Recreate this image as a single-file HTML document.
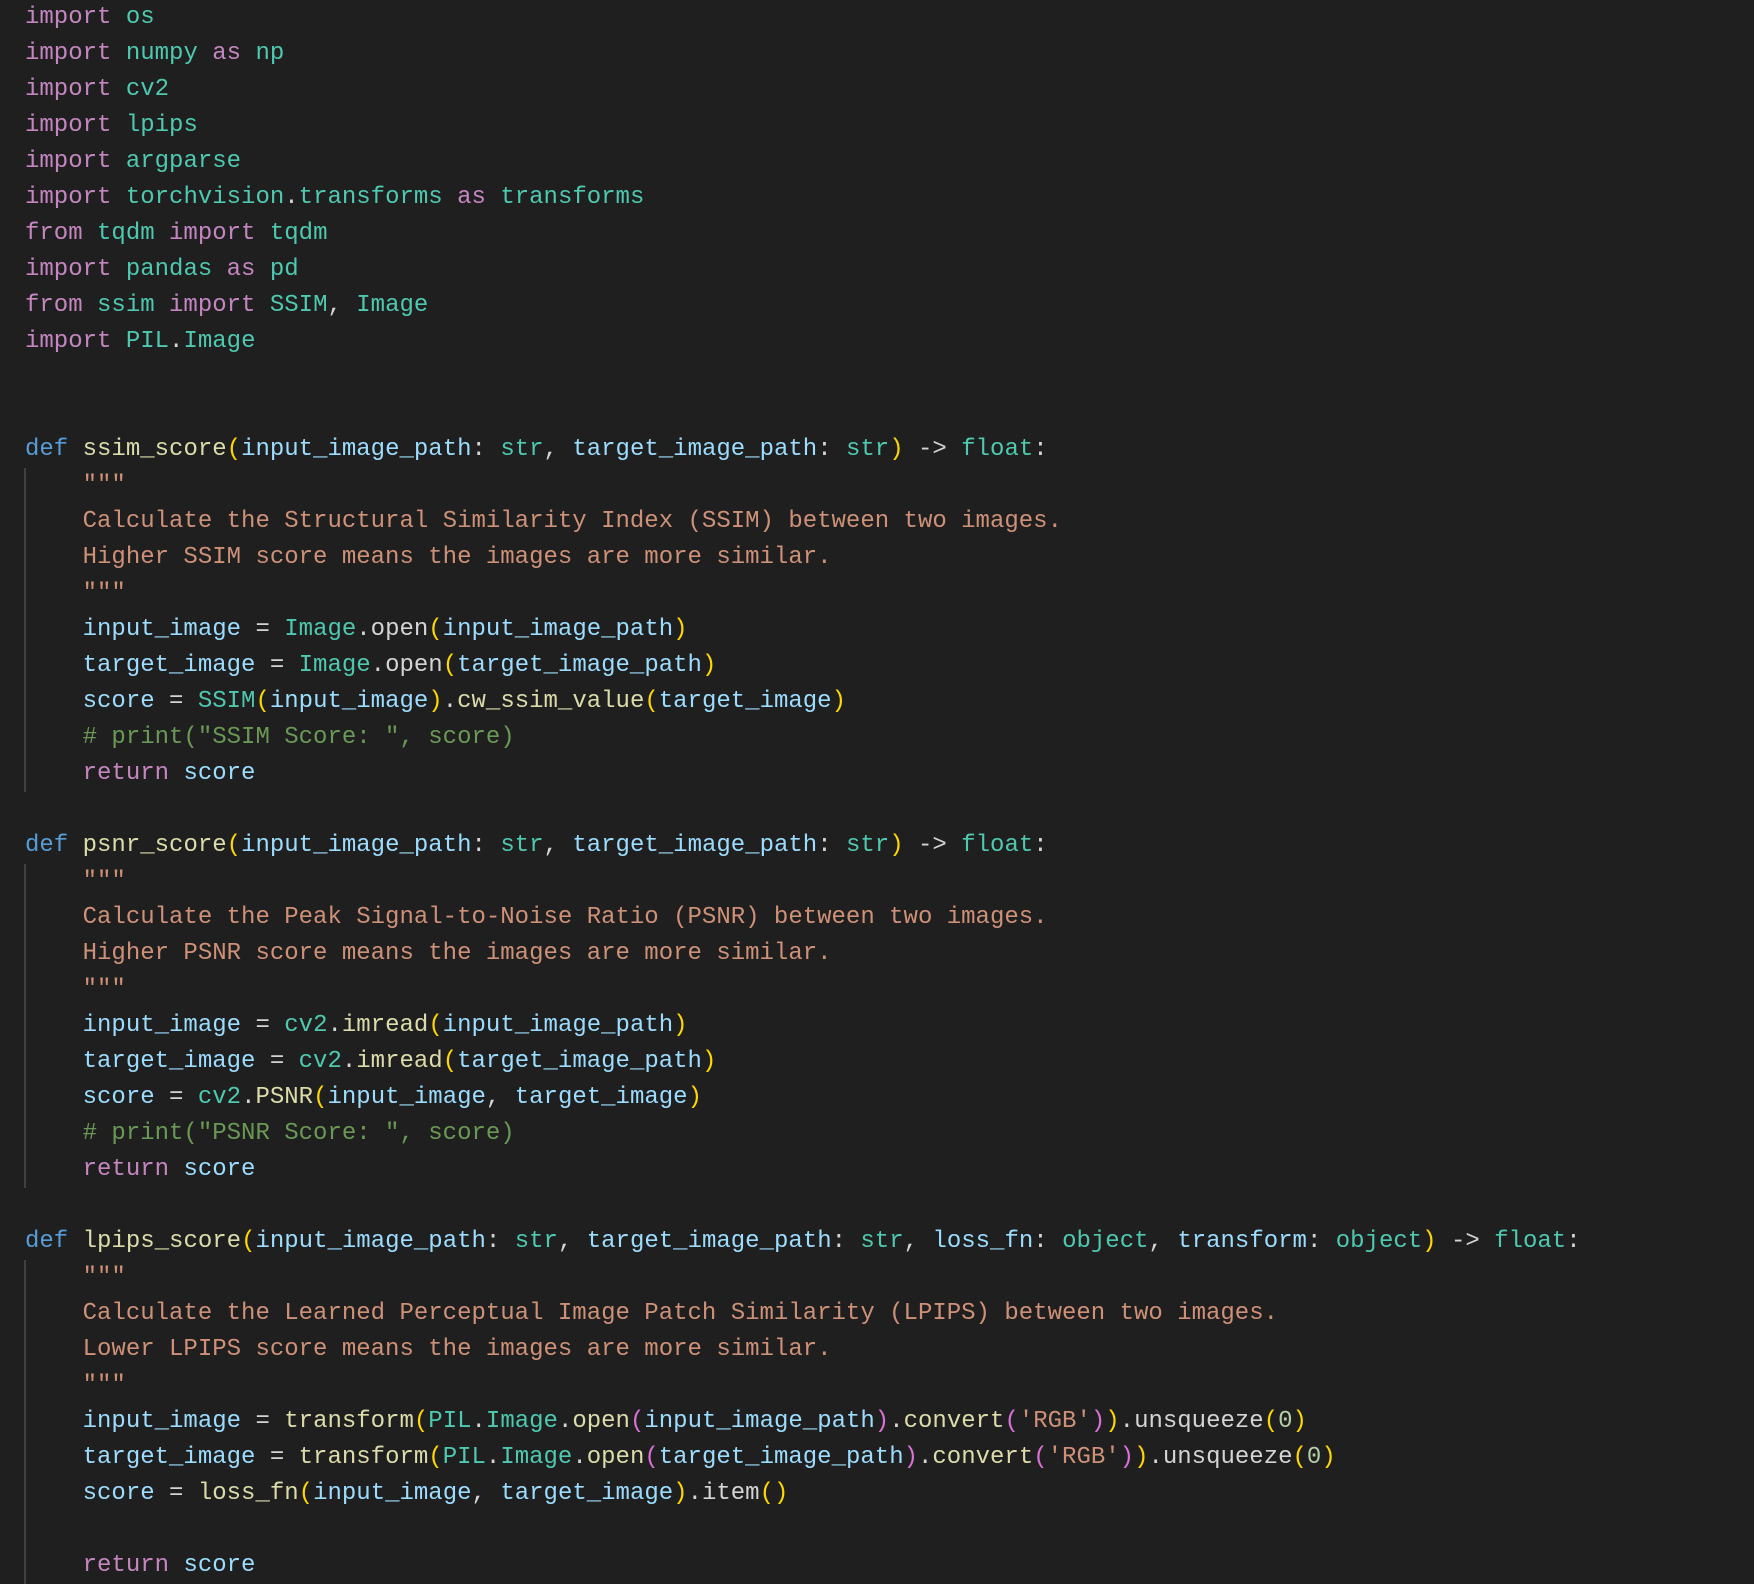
<!DOCTYPE html>
<html><head><meta charset="utf-8"><style>
html,body{margin:0;padding:0;background:#1f1f1f;width:1754px;height:1584px;overflow:hidden}
pre{margin:0;padding:0 0 0 25px;font-family:"Liberation Mono",monospace;font-size:24px;line-height:36px;color:#d4d4d4;white-space:pre}
.k{color:#c586c0}.m{color:#4ec9b0}.d{color:#569cd6}.f{color:#dcdcaa}.p{color:#9cdcfe}.s{color:#ce9178}.c{color:#6a9955}.y{color:#ffd700}.q{color:#da70d6}.n{color:#b5cea8}
.g{position:absolute;left:24px;width:2px;background:#404040}
</style></head><body>
<div class="g" style="top:468px;height:324px"></div>
<div class="g" style="top:864px;height:324px"></div>
<div class="g" style="top:1260px;height:324px"></div>
<pre><span class="k">import</span> <span class="m">os</span>
<span class="k">import</span> <span class="m">numpy</span> <span class="k">as</span> <span class="m">np</span>
<span class="k">import</span> <span class="m">cv2</span>
<span class="k">import</span> <span class="m">lpips</span>
<span class="k">import</span> <span class="m">argparse</span>
<span class="k">import</span> <span class="m">torchvision</span>.<span class="m">transforms</span> <span class="k">as</span> <span class="m">transforms</span>
<span class="k">from</span> <span class="m">tqdm</span> <span class="k">import</span> <span class="m">tqdm</span>
<span class="k">import</span> <span class="m">pandas</span> <span class="k">as</span> <span class="m">pd</span>
<span class="k">from</span> <span class="m">ssim</span> <span class="k">import</span> <span class="m">SSIM</span>, <span class="m">Image</span>
<span class="k">import</span> <span class="m">PIL</span>.<span class="m">Image</span>


<span class="d">def</span> <span class="f">ssim_score</span><span class="y">(</span><span class="p">input_image_path</span>: <span class="m">str</span>, <span class="p">target_image_path</span>: <span class="m">str</span><span class="y">)</span> -&gt; <span class="m">float</span>:
    <span class="s">"""</span>
<span class="s">    Calculate the Structural Similarity Index (SSIM) between two images.</span>
<span class="s">    Higher SSIM score means the images are more similar.</span>
<span class="s">    """</span>
    <span class="p">input_image</span> = <span class="m">Image</span>.open<span class="y">(</span><span class="p">input_image_path</span><span class="y">)</span>
    <span class="p">target_image</span> = <span class="m">Image</span>.open<span class="y">(</span><span class="p">target_image_path</span><span class="y">)</span>
    <span class="p">score</span> = <span class="m">SSIM</span><span class="y">(</span><span class="p">input_image</span><span class="y">)</span>.<span class="f">cw_ssim_value</span><span class="y">(</span><span class="p">target_image</span><span class="y">)</span>
    <span class="c"># print("SSIM Score: ", score)</span>
    <span class="k">return</span> <span class="p">score</span>

<span class="d">def</span> <span class="f">psnr_score</span><span class="y">(</span><span class="p">input_image_path</span>: <span class="m">str</span>, <span class="p">target_image_path</span>: <span class="m">str</span><span class="y">)</span> -&gt; <span class="m">float</span>:
    <span class="s">"""</span>
<span class="s">    Calculate the Peak Signal-to-Noise Ratio (PSNR) between two images.</span>
<span class="s">    Higher PSNR score means the images are more similar.</span>
<span class="s">    """</span>
    <span class="p">input_image</span> = <span class="m">cv2</span>.<span class="f">imread</span><span class="y">(</span><span class="p">input_image_path</span><span class="y">)</span>
    <span class="p">target_image</span> = <span class="m">cv2</span>.<span class="f">imread</span><span class="y">(</span><span class="p">target_image_path</span><span class="y">)</span>
    <span class="p">score</span> = <span class="m">cv2</span>.<span class="f">PSNR</span><span class="y">(</span><span class="p">input_image</span>, <span class="p">target_image</span><span class="y">)</span>
    <span class="c"># print("PSNR Score: ", score)</span>
    <span class="k">return</span> <span class="p">score</span>

<span class="d">def</span> <span class="f">lpips_score</span><span class="y">(</span><span class="p">input_image_path</span>: <span class="m">str</span>, <span class="p">target_image_path</span>: <span class="m">str</span>, <span class="p">loss_fn</span>: <span class="m">object</span>, <span class="p">transform</span>: <span class="m">object</span><span class="y">)</span> -&gt; <span class="m">float</span>:
    <span class="s">"""</span>
<span class="s">    Calculate the Learned Perceptual Image Patch Similarity (LPIPS) between two images.</span>
<span class="s">    Lower LPIPS score means the images are more similar.</span>
<span class="s">    """</span>
    <span class="p">input_image</span> = <span class="f">transform</span><span class="y">(</span><span class="m">PIL</span>.<span class="m">Image</span>.<span class="f">open</span><span class="q">(</span><span class="p">input_image_path</span><span class="q">)</span>.<span class="f">convert</span><span class="q">(</span><span class="s">'RGB'</span><span class="q">)</span><span class="y">)</span>.unsqueeze<span class="y">(</span><span class="n">0</span><span class="y">)</span>
    <span class="p">target_image</span> = <span class="f">transform</span><span class="y">(</span><span class="m">PIL</span>.<span class="m">Image</span>.<span class="f">open</span><span class="q">(</span><span class="p">target_image_path</span><span class="q">)</span>.<span class="f">convert</span><span class="q">(</span><span class="s">'RGB'</span><span class="q">)</span><span class="y">)</span>.unsqueeze<span class="y">(</span><span class="n">0</span><span class="y">)</span>
    <span class="p">score</span> = <span class="f">loss_fn</span><span class="y">(</span><span class="p">input_image</span>, <span class="p">target_image</span><span class="y">)</span>.item<span class="y">()</span>

    <span class="k">return</span> <span class="p">score</span></pre>
</body></html>
